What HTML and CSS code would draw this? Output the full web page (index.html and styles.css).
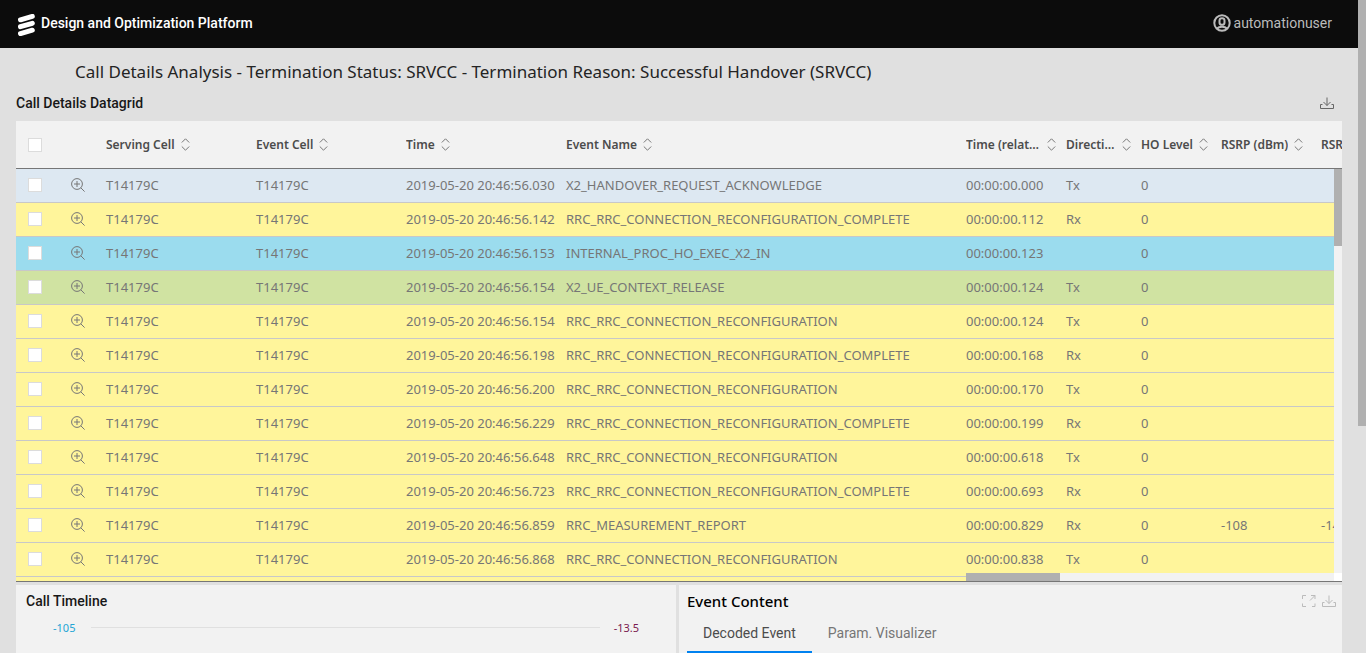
FILE: index.html
```html
<!DOCTYPE html>
<html lang="en">
<head>
<meta charset="utf-8">
<title>Design and Optimization Platform</title>
<link rel="stylesheet" href="styles.css">
</head>
<body>
<svg class="sprite" aria-hidden="true">
  <symbol id="sort" viewBox="0 0 9 13"><path d="M.8 4.500 4.500.8l3.700 3.700M.8 8.500l3.700 3.700 3.700-3.700"/></symbol>
  <symbol id="magnify" viewBox="0 0 14 14"><circle cx="6" cy="6" r="5.400"/><path d="M6 3v6M3 6h6M9.800 9.800l3.800 3.800"/></symbol>
  <symbol id="download" viewBox="0 0 14 13"><path d="M7 .5v8M3.500 5 7 8.500 10.500 5M2.500 7.500h-2v4h13v-4h-2"/></symbol>
  <symbol id="expand" viewBox="0 0 14 13"><path d="M4 .5H.5V4M.5 8.500v3H4M10 11.500h3v-3M9 .5h4V4M13 .5 8 5.500"/></symbol>
</svg>
<div class="window">
  <div class="app">
    <header class="topbar">
      <svg class="logo" viewBox="0 0 17 22" aria-hidden="true"><path d="M2.500 5.800 14.300 2.400M2.500 12.700 14.300 9.300M2.500 19.600 14.300 16.200"/></svg>
      <span class="brand">Design and Optimization Platform</span>
      <button class="user" type="button">
        <svg class="avatar" viewBox="0 0 18 18" aria-hidden="true"><circle cx="9" cy="9" r="7.700"/><rect x="6.500" y="4.200" width="5" height="6.600" rx="2.400"/><path d="M3.800 14.800c1.400-1.500 3.200-2 5.200-2s3.800.5 5.200 2"/></svg>
        automationuser
      </button>
    </header>
    <main class="main">
      <h1 class="page-title">Call Details Analysis - Termination Status: SRVCC - Termination Reason: Successful Handover (SRVCC)</h1>
      <div class="section-head">
        <h2 class="section-title">Call Details Datagrid</h2>
        <button class="icon-btn" type="button" aria-label="Export datagrid"><svg class="tool"><use href="#download"/></svg></button>
      </div>
      <div class="datagrid">
        <table class="grid">
          <colgroup><col class="w40"><col class="w40"><col class="w150"><col class="w150"><col class="w160"><col class="w400"><col class="w100"><col class="w75"><col class="w80"><col class="w100"><col class="w100"></colgroup>
          <thead><tr id="head"></tr></thead>
          <tbody id="rows"></tbody>
        </table>
        <div class="vbar"><div class="vthumb"></div></div>
        <div class="hbar"><div class="hthumb"></div></div>
      </div>
      <div class="panels">
        <section class="panel">
          <h2 class="section-title timeline-title">Call Timeline</h2>
          <div class="axis"><span class="axis-left">-105</span><span class="axis-line"></span><span class="axis-right">-13.5</span></div>
        </section>
        <section class="panel">
          <div class="content-head">
            <h2 class="content-title">Event Content</h2>
            <button class="icon-btn faint" type="button" aria-label="Expand"><svg class="tool"><use href="#expand"/></svg></button>
            <button class="icon-btn faint" type="button" aria-label="Export event"><svg class="tool"><use href="#download"/></svg></button>
          </div>
          <div class="tabs" role="tablist">
            <button class="tab active" type="button" role="tab" aria-selected="true">Decoded Event</button>
            <button class="tab" type="button" role="tab" aria-selected="false">Param. Visualizer</button>
          </div>
        </section>
      </div>
    </main>
  </div>
  <div class="pagebar"><div class="pagethumb"></div></div>
</div>
<script src="grid.js"></script>
</body>
</html>
```
FILE: styles.css
```css
* { box-sizing: border-box; }
body {
  margin: 0;
  overflow: hidden;
  background: #e0e0e0;
  color: #242424;
  font-family: "Noto Sans", "Open Sans", sans-serif;
  font-size: 13px;
}
h1, h2 { margin: 0; }
button { margin: 0; padding: 0; border: 0; background: none; color: inherit; font: inherit; }
svg { fill: none; stroke: currentColor; display: block; flex: none; }
.sprite { position: absolute; width: 0; height: 0; }
.window { display: flex; height: 100vh; }
.app { flex: 1; min-width: 0; display: flex; flex-direction: column; }
.pagebar { width: 8px; background: #e0e0e0; }
.pagethumb { height: 65.2%; background: #b0b0b0; }

.topbar {
  display: flex;
  align-items: center;
  flex: none;
  height: 48px;
  padding: 0 26px 2px 18px;
  background: #0c0c0c;
  color: #fff;
}
.logo { width: 17px; height: 22px; margin: 4px 6px 0 0; stroke-width: 5; stroke-linecap: round; }
.brand, .user, .section-title, .tab { font-family: Roboto, "Noto Sans", sans-serif; font-size: 14px; }
.brand { font-weight: 500; }
.user { display: flex; align-items: center; gap: 3px; margin-left: auto; color: #bbb; }
.avatar { width: 18px; height: 18px; stroke-width: 2; }

.main { flex: 1; min-height: 0; display: flex; flex-direction: column; padding: 0 16px; }
.page-title { padding: 12px 0 0 59px; font-size: 17px; line-height: 24px; font-weight: 400; white-space: nowrap; }
.section-head { display: flex; align-items: center; justify-content: space-between; height: 37px; padding: 1px 8px 0 0; }
.section-title { line-height: 20px; font-weight: 500; color: #181818; }
.icon-btn { color: #666; }
.faint { color: #bbb; }
.tool { width: 14px; height: 13px; }

.datagrid {
  position: relative;
  flex: 1;
  min-height: 0;
  overflow: hidden;
  background: #f2f2f2;
  border-bottom: 1px solid #767676;
}
.grid { width: 1395px; table-layout: fixed; border-spacing: 0; }
.w40 { width: 40px; }
.w75 { width: 75px; }
.w80 { width: 80px; }
.w100 { width: 100px; }
.w150 { width: 150px; }
.w160 { width: 160px; }
.w400 { width: 400px; }
th, td { padding: 0 0 0 10px; text-align: left; white-space: nowrap; }
th { height: 48px; border-bottom: 1px solid #767676; color: #4c4c4c; font-size: 12px; font-weight: 600; }
td { height: 34px; padding-bottom: 2px; border-bottom: 1px solid #c8c8c8; color: #767676; font-size: 13px; line-height: 20px; }
.sorter { display: flex; align-items: center; gap: 6px; font-weight: 600; }
.relative-head { max-width: 90px; }
.direction-head { max-width: 65px; }
.label { overflow: hidden; text-overflow: ellipsis; }
.sort { width: 9px; height: 13px; color: #777; }
.check { appearance: none; display: block; width: 14px; height: 14px; margin: 0 0 0 2px; border: 1px solid #dcdcdc; background: #fff; }
.magnify { width: 14px; height: 14px; margin-left: 5px; }
.blue { background: #dde8f2; }
.yellow { background: #fff59b; }
.cyan { background: #9bdcee; }
.green { background: #d0e3a2; }
.vbar { position: absolute; top: 48px; right: 0; bottom: 0; width: 8px; background: #f2f2f2; }
.vthumb { height: 77px; background: #b0b0b0; }
.hbar { position: absolute; left: 950px; right: 0; bottom: 0; height: 8px; background: #f2f2f2; border-right: 8px solid #fff; }
.hthumb { width: 94px; height: 8px; background: #b0b0b0; }

.panels { display: grid; grid-template-columns: 660fr 663fr; gap: 3px; padding-top: 3px; }
.panel { background: #f2f2f2; }
.timeline-title { padding: 6px 10px 0; }
.axis { display: flex; align-items: center; padding: 7px 37px 0; font-size: 11px; line-height: 20px; }
.axis-left { color: #23a5d5; }
.axis-line { flex: 1; height: 1px; margin: 0 14px 2px 16px; background: #e0e0e0; }
.axis-right { color: #7b1a50; }
.content-head { display: flex; align-items: center; gap: 6px; height: 32px; padding: 0 6px 0 8px; }
.content-title { margin-right: auto; color: #000; font-size: 15px; line-height: 20px; font-weight: 500; }
.tabs { display: flex; padding-left: 8px; }
.tab { height: 36px; padding: 0 16px 2px; color: #767676; border-bottom: 2px solid transparent; }
.active { color: #4c4c4c; border-bottom-color: #0082f0; }
```
FILE: grid.js
```js
const icon = (id) => `<svg class="${id}" aria-hidden="true"><use href="#${id}"/></svg>`;
const check = (label) => `<input class="check" type="checkbox" aria-label="${label}">`;

const heads = ["Serving Cell", "Event Cell", "Time", "Event Name", "Time (relative)", "Direction", "HO Level", "RSRP (dBm)", "RSRQ (dB)"];
const headClass = { "Time (relative)": "relative-head", "Direction": "direction-head" };
document.getElementById("head").innerHTML = `<th>${check("Select all")}</th><th></th>` +
  heads.map((h) => `<th><button type="button" class="sorter ${headClass[h] || ""}"><span class="label">${h}</span>${icon("sort")}</button></th>`).join("");

const RC = "RRC_RRC_CONNECTION_RECONFIGURATION";
const rows = [
  ["blue", "56.030", "X2_HANDOVER_REQUEST_ACKNOWLEDGE", "000", "Tx"],
  ["yellow", "56.142", RC + "_COMPLETE", "112", "Rx"],
  ["cyan", "56.153", "INTERNAL_PROC_HO_EXEC_X2_IN", "123", ""],
  ["green", "56.154", "X2_UE_CONTEXT_RELEASE", "124", "Tx"],
  ["yellow", "56.154", RC, "124", "Tx"],
  ["yellow", "56.198", RC + "_COMPLETE", "168", "Rx"],
  ["yellow", "56.200", RC, "170", "Tx"],
  ["yellow", "56.229", RC + "_COMPLETE", "199", "Rx"],
  ["yellow", "56.648", RC, "618", "Tx"],
  ["yellow", "56.723", RC + "_COMPLETE", "693", "Rx"],
  ["yellow", "56.859", "RRC_MEASUREMENT_REPORT", "829", "Rx", "-108", "-14"],
  ["yellow", "56.868", RC, "838", "Tx"],
];
document.getElementById("rows").innerHTML = rows.map(([tone, time, name, rel, dir, rsrp = "", rsrq = ""]) =>
  `<tr class="${tone}"><td>${check("Select " + name)}</td><td>${icon("magnify")}</td>` +
  ["T14179C", "T14179C", "2019-05-20 20:46:" + time, name, "00:00:00." + rel, dir, "0", rsrp, rsrq].map((v) => `<td>${v}</td>`).join("") + "</tr>").join("") +
  `<tr class="yellow">${"<td></td>".repeat(11)}</tr>`;
```
